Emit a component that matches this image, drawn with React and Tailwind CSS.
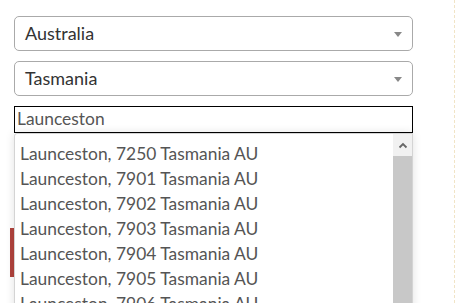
import React from 'react';

const results = ['7250', '7901', '7902', '7903', '7904', '7905', '7906', '7907'];

function Select({ value }) {
  return (
    <div className="relative h-[35px] w-[399px] rounded-[5px] border border-[#aaaaaa] bg-white">
      <span className="absolute left-[10px] top-[5px] text-[18px] leading-[22px] text-[#333]">{value}</span>
      {/* caret */}
      <span className="absolute right-[10px] top-[15px] h-0 w-0 border-x-[4px] border-t-[5px] border-x-transparent border-t-[#888]" />
    </div>
  );
}

export default function App() {
  return (
    <div
      className="relative h-[303px] w-[474px] overflow-hidden bg-white"
      style={{ fontFamily: 'Lato, "Open Sans", sans-serif' }}
    >
      {/* Page behind the dropdown */}
      <div className="absolute left-[454px] top-0 h-full border-l border-dashed border-[#f1e4c6]" />
      <div className="absolute left-[10px] top-[228px] h-[49px] w-[5px] bg-[#b1433d]" />

      <div className="flex flex-col gap-[10px] pl-[14px] pt-[16px]">
        <Select value="Australia" />
        <Select value="Tasmania" />
        <div className="h-[27px] w-[399px] border border-black bg-white pl-[2px] text-[17.4px] leading-[24px] text-[#555]">
          Launceston
        </div>
      </div>

      {/* Autocomplete results */}
      <div className="absolute left-[14px] top-[133px] flex h-[200px] w-[399px] overflow-hidden rounded-tl-[3px] border border-[#d4d4d4] bg-white shadow-[0_0_10px_rgba(0,0,0,0.12)]">
        <ul className="flex-1 pl-[5px] pt-[7px]">
          {results.map((pc) => (
            <li key={pc} className="h-[25px] whitespace-nowrap text-[17.4px] leading-[25px] text-[#555]">
              Launceston, {pc} Tasmania AU
            </li>
          ))}
        </ul>
        <div className="flex w-[19px] flex-col">
          <div className="flex h-[22px] items-center justify-center bg-[#f1f1f1]">
            <svg width="10" height="7" viewBox="0 0 10 7">
              <path d="M1.5 5.5 L5 2 L8.5 5.5" fill="none" stroke="#666" strokeWidth="1.8" />
            </svg>
          </div>
          <div className="flex-1 bg-[#c8c8c8]" />
        </div>
      </div>
    </div>
  );
}
